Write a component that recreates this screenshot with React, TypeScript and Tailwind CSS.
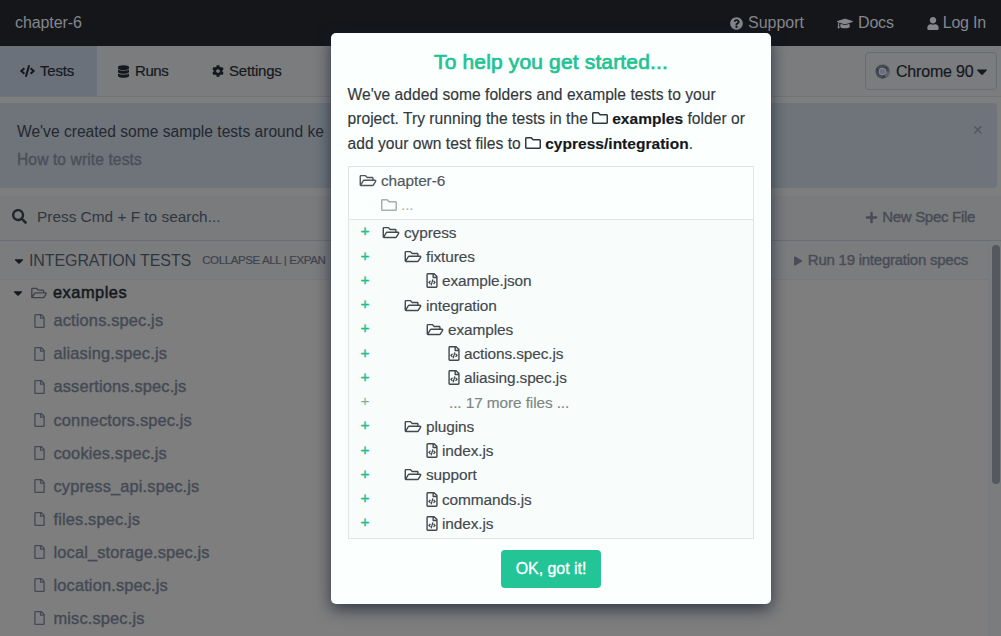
import type { ReactNode } from "react";
import {
  FaCaretDown,
  FaCode,
  FaCog,
  FaDatabase,
  FaGraduationCap,
  FaPlay,
  FaPlus,
  FaQuestionCircle,
  FaRegFile,
  FaRegFileCode,
  FaRegFolder,
  FaRegFolderOpen,
  FaSearch,
  FaUser,
} from "react-icons/fa";

const specs = [
  "actions.spec.js",
  "aliasing.spec.js",
  "assertions.spec.js",
  "connectors.spec.js",
  "cookies.spec.js",
  "cypress_api.spec.js",
  "files.spec.js",
  "local_storage.spec.js",
  "location.spec.js",
  "misc.spec.js",
];

type Node = { name: string; kind: "folder" | "file" | "more"; indent: string };

const tree: Node[] = [
  { name: "cypress", kind: "folder", indent: "pl-[10px]" },
  { name: "fixtures", kind: "folder", indent: "pl-[32px]" },
  { name: "example.json", kind: "file", indent: "pl-[54px]" },
  { name: "integration", kind: "folder", indent: "pl-[32px]" },
  { name: "examples", kind: "folder", indent: "pl-[54px]" },
  { name: "actions.spec.js", kind: "file", indent: "pl-[76px]" },
  { name: "aliasing.spec.js", kind: "file", indent: "pl-[76px]" },
  { name: "... 17 more files ...", kind: "more", indent: "pl-[77px]" },
  { name: "plugins", kind: "folder", indent: "pl-[32px]" },
  { name: "index.js", kind: "file", indent: "pl-[54px]" },
  { name: "support", kind: "folder", indent: "pl-[32px]" },
  { name: "commands.js", kind: "file", indent: "pl-[54px]" },
  { name: "index.js", kind: "file", indent: "pl-[54px]" },
];

function ChromeMark() {
  return (
    <svg viewBox="0 0 16 16" className="mr-[6px] size-[15px] shrink-0">
      <circle cx="8" cy="8" r="7.6" fill="#454b55" />
      <path d="M8 .4A7.6 7.6 0 0 1 11.8 14.6L8 8H15A7.6 7.6 0 0 0 8 .4Z" fill="#5e646e" />
      <path d="M8 4.2H14.6M4.7 9.9 1.4 4.2M11.3 9.9 8 15.6" stroke="#2a2f38" strokeWidth="0.8" />
      <circle cx="8" cy="8" r="4" fill="#858a90" />
      <circle cx="8" cy="8" r="3" fill="#6a717c" />
    </svg>
  );
}

function TreeRow({ node }: { node: Node }) {
  const more = node.kind === "more";
  return (
    <li className={`flex h-[24.25px] items-center ${more ? "text-[#7d8683]" : "text-[#43484d]"}`}>
      <span
        className={`w-[12px] shrink-0 pb-[3px] text-center ${more ? "text-[#7fae9b]" : "text-[#1fbf8f] [-webkit-text-stroke:0.4px]"}`}
      >
        +
      </span>
      <span className={`ml-px flex items-center [-webkit-text-stroke:0.15px] ${node.indent}`}>
        {node.kind === "folder" && <FaRegFolderOpen className="mr-1 h-[15px] w-[18px]" />}
        {node.kind === "file" && <FaRegFileCode className="mr-1 h-[15px] w-[12px]" />}
        {node.name}
      </span>
    </li>
  );
}

function Bold({ children }: { children: ReactNode }) {
  return (
    <span className="text-[15.5px] font-bold text-[#14181c]">
      <FaRegFolder className="mr-1 inline h-4 w-4 align-[-2px] text-[#33383d]" />
      {children}
    </span>
  );
}

export default function App() {
  return (
    <div className="relative flex h-[636px] w-[1001px] flex-col overflow-hidden bg-[#7e7e7e] font-['Liberation_Sans',Arial,sans-serif] text-[15px] text-[#14181f]">
      <header className="flex h-[46px] shrink-0 items-center justify-between bg-[#14161a] pr-[15px] pl-[15px] text-[16px] text-[#85878c]">
        <span className="tracking-[-0.1px]">chapter-6</span>
        <nav className="flex items-center gap-[33px]">
          <span className="flex items-center gap-[5px]"><FaQuestionCircle className="size-[13px]" />Support</span>
          <span className="flex items-center gap-[5px] tracking-[-0.2px]"><FaGraduationCap className="h-[13px] w-4" />Docs</span>
          <span className="flex items-center gap-[4px] tracking-[-0.2px]"><FaUser className="h-[13px] w-3" />Log In</span>
        </nav>
      </header>

      <div className="flex h-[51px] shrink-0 items-stretch border-b border-[#6e737c] bg-[#7b7c7e] tracking-[-0.2px] [-webkit-text-stroke:0.2px]">
        <div className="flex w-[97px] items-center gap-[5px] bg-[#6b717b] pl-[20px]"><FaCode className="h-3 w-[15px]" />Tests</div>
        <div className="flex w-[94px] items-center gap-[6px] pl-[21px] tracking-[-0.4px]"><FaDatabase className="h-[13px] w-[11px]" />Runs</div>
        <div className="flex items-center gap-[5px] pl-[21px]"><FaCog className="size-3" />Settings</div>
        <button className="mt-[6px] mr-1 ml-auto flex h-[38px] w-[132px] items-center rounded border border-[#666c77] pt-px pl-[9px] text-[16px]">
          <ChromeMark />
          Chrome 90
          <FaCaretDown className="ml-[3px] h-[17px] w-[12px]" />
        </button>
      </div>

      <section className="mt-[6px] mr-1 flex h-[85px] shrink-0 justify-between rounded-r bg-[#6e747a] pt-[18px] pr-[14px] pl-[17px]">
        <div className="leading-[28px] text-[#24282f]">
          <p className="-mt-[3px] text-[15.6px] whitespace-nowrap">We've created some sample tests around ke</p>
          <p className="text-[15.6px] tracking-[0.1px] text-[#4a4f5a] [-webkit-text-stroke:0.4px]">How to write tests</p>
        </div>
        <span className="-mt-[4px] text-[18px] text-[#50555f]">×</span>
      </section>

      <div className="mt-[8px] flex h-[45px] shrink-0 items-center border-b border-[#696e77] bg-[#7a7b7d] pr-[26px] pb-[2px] pl-[12px]">
        <FaSearch className="mr-[10px] mb-[2px] size-[15px] text-[#20252e]" />
        <span className="text-[15.4px] text-[#303640]">Press Cmd + F to search...</span>
        <span className="ml-auto flex items-center gap-1 tracking-[-0.3px] text-[#474c57] [-webkit-text-stroke:0.4px]">
          <FaPlus className="size-[13px]" />
          New Spec File
        </span>
      </div>

      <main className="flex min-h-0 flex-1">
        <div className="flex w-[988px] flex-col">
          <div className="flex h-[39px] shrink-0 items-center border-b border-[#75777b] bg-[#7b7c7e] pt-px pr-[20px] pl-[14px]">
            <FaCaretDown className="mr-[5px] h-[14px] w-[10px]" />
            <span className="text-[16px] tracking-[-0.1px] text-[#303640]">INTEGRATION TESTS</span>
            <span className="ml-[11px] text-[11.5px] tracking-[-0.38px] whitespace-nowrap text-[#3e434d] [-webkit-text-stroke:0.2px]">
              COLLAPSE ALL | EXPAN
            </span>
            <span className="ml-auto flex items-center gap-[6px] tracking-[-0.24px] text-[#474c57] [-webkit-text-stroke:0.4px]">
              <FaPlay className="h-[10px] w-2" />
              Run 19 integration specs
            </span>
          </div>
          <div className="flex h-[24px] shrink-0 items-center pt-px pl-[13px] text-[16.4px] tracking-[0.5px] [-webkit-text-stroke:0.5px]">
            <FaCaretDown className="mr-[8px] h-[14px] w-[10px]" />
            <FaRegFolderOpen className="mr-[6px] h-[14px] w-4 text-[#3d424c] [-webkit-text-stroke:0]" />
            examples
          </div>
          <ul className="text-[16.4px] tracking-[0.15px] text-[#444a55] [-webkit-text-stroke:0.4px]">
            {specs.map((name) => (
              <li key={name} className="flex h-[33.1px] items-center pl-[34px]">
                <FaRegFile className="mr-[8.5px] h-[14px] w-[11px]" />
                {name}
              </li>
            ))}
          </ul>
        </div>
        <div className="flex w-[13px] justify-end border-l border-[#75787d] bg-[#7b7c7e] pt-1 pr-px">
          <div className="h-[239px] w-[8px] rounded-full bg-[#535861]" />
        </div>
      </main>

      <div role="dialog" className="absolute top-[33px] left-[331px] h-[571px] w-[440px] rounded-[5px] bg-[#fbfffe] px-[17px] pt-[15px] text-[15.4px] text-[#33383d] shadow-[0_5px_16px_rgba(22,30,50,0.75)]">
        <h2 className="text-center text-[21px] leading-[28px] tracking-[0.15px] text-[#21c394] [-webkit-text-stroke:0.7px]">
          To help you get started...
        </h2>
        <p className="mt-[7px] -ml-[0.5px] text-[15.6px] leading-[24.3px] tracking-[0.03px] whitespace-nowrap [-webkit-text-stroke:0.15px]">
          We've added some folders and example tests to your
          <br />
          project. Try running the tests in the <Bold>examples</Bold> folder or
          <br />
          add your own test files to <Bold>cypress/integration</Bold>.
        </p>
        <div className="mt-[10px] h-[373px] w-[406px] border border-[#dfe6e4] tracking-[-0.1px]">
          <div className="h-[53px] border-b border-[#dfe6e4] pt-[2px] pl-[10px]">
            <div className="flex h-[24px] items-center text-[#50565a] [-webkit-text-stroke:0.15px]"><FaRegFolderOpen className="mr-1 h-[15px] w-[18px]" />chapter-6</div>
            <div className="flex h-[24px] items-center pl-[22px] text-[#a5b1ad]"><FaRegFolder className="mr-1 size-4" />...</div>
          </div>
          <ul className="h-[318px] bg-[#f8fcfb] pt-[0.4px] pl-[10px]">
            {tree.map((node, i) => (
              <TreeRow key={i} node={node} />
            ))}
          </ul>
        </div>
        <button className="mx-auto mt-[11px] flex h-[38px] w-[100px] items-center justify-center rounded bg-[#23c496] pt-px text-[16px] tracking-[-0.05px] text-white [-webkit-text-stroke:0.3px]">
          OK, got it!
        </button>
      </div>
    </div>
  );
}
